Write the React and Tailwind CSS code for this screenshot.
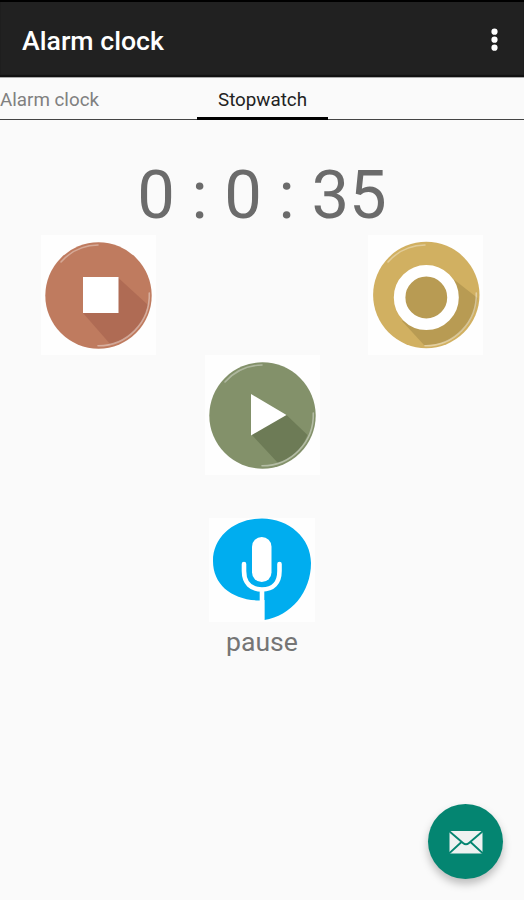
const TABS = [
  { label: "Alarm clock", active: false },
  { label: "Stopwatch", active: true },
];

function Shine() {
  return (
    <g fill="none" stroke="#fff" strokeWidth="1.6" strokeLinecap="round">
      <path d="M20 27A50.500 50.500 0 0 1 57 10" opacity=".35" />
      <path d="M108.300 58A51 51 0 0 1 57 110.800" opacity=".4" />
    </g>
  );
}

function StopIcon() {
  return (
    <svg viewBox="0 0 115 120" className="h-[120px] w-[115px] bg-[#fefefe]" aria-hidden>
      <circle cx="57.5" cy="60.5" r="53.2" fill="#bf7b5f" />
      <path d="M77.5 43L107 70A51 51 0 0 1 70 110L42 78Z" fill="#af6b54" />
      <path d="M42 42H77.500V78H42Z" fill="#fff" />
      <Shine />
    </svg>
  );
}

function LapIcon() {
  return (
    <svg viewBox="0 0 115 120" className="h-[120px] w-[115px] bg-[#fefefe]" aria-hidden>
      <circle cx="58.300" cy="60" r="53.2" fill="#d1b061" />
      <path d="M84 43L109.500 63A51 51 0 0 1 56 110L34 86Z" fill="#b89b53" />
      <circle cx="58.300" cy="62.500" r="26.700" fill="#b89b53" stroke="#fff" strokeWidth="11.600" />
      <Shine />
    </svg>
  );
}

function PlayIcon() {
  return (
    <svg viewBox="0 0 115 120" className="h-[120px] w-[115px] bg-[#fefefe]" aria-hidden>
      <circle cx="57.500" cy="60.500" r="53.2" fill="#83916a" />
      <path d="M81 59.500L102.500 80A49 49 0 0 1 73 108L46 79Z" fill="#6d7b56" />
      <path d="M46 39V80.500L81.500 60Z" fill="#fff" />
      <Shine />
    </svg>
  );
}

function MicIcon() {
  return (
    <svg viewBox="0 0 106 104" className="h-[104px] w-[106px] bg-[#fefefe]" aria-hidden>
      <path
        d="M53 .5C80 .5 102 20 102 45C102 74 82 98 55.500 102V82L50.500 82.500C23 82 4 67 4 43C4 19 25 .5 53 .5Z"
        fill="#00adef"
      />
      <rect x="43" y="19" width="19.500" height="45" rx="9.750" fill="#fff" />
      <g fill="none" stroke="#fff" strokeWidth="4.600" strokeLinecap="round">
        <path d="M35 46V53C35 65 42 71.500 53 71.500S70.500 65 70.500 53V46" />
        <path d="M53 72V103" strokeLinecap="butt" />
      </g>
    </svg>
  );
}

function MailIcon() {
  return (
    <svg viewBox="0 0 34 24" className="h-6 w-[34px]" aria-hidden>
      <path d="M.5 1H33.500V23.500H.5Z" fill="#eef2f1" />
      <path d="M0 1L14 13Q17 15.500 20 13L34 1M0 23.500L12.500 12M34 23.500L21.500 12" fill="none" stroke="#048571" strokeWidth="1.900" />
    </svg>
  );
}

function Header() {
  return (
    <header className="flex h-[77px] items-center justify-between border-t-2 border-black bg-[#212121] pl-[22px] pr-[15px] text-white shadow-[inset_0_-2px_1px_#111]">
      <h1 className="mt-1 text-[26.700px] font-medium">Alarm clock</h1>
      <button aria-label="More options">
        <svg viewBox="0 0 29 30" className="h-[30px] w-[29px]" fill="currentColor" aria-hidden>
          <circle cx="14.500" cy="6.700" r="3.100" />
          <circle cx="14.500" cy="14.700" r="3.100" />
          <circle cx="14.500" cy="22.700" r="3.100" />
        </svg>
      </button>
    </header>
  );
}

function Tabs() {
  return (
    <nav className="flex h-[43px] border-b border-[#444] border-t border-t-[#aaa]">
      {TABS.map(({ label, active }) => (
        <button
          key={label}
          className={
            active
              ? "h-[42px] w-[131px] border-b-[3px] border-black pt-[6px] text-[18.800px] text-[#222]"
              : "h-[42px] w-[197px] pt-[3px] text-left text-[18.800px] text-[#808080]"
          }
        >
          {label}
        </button>
      ))}
    </nav>
  );
}

export default function App() {
  return (
    <div className="flex h-[900px] w-[524px] flex-col overflow-hidden bg-[#fafafa] font-[Roboto,sans-serif]">
      <Header />
      <Tabs />
      <main className="flex flex-1 flex-col items-center">
        <p className="mt-[35px] h-[80px] text-center text-[67px] leading-[80px] text-[#6b6b6b]">0 : 0 : 35</p>
        <div className="flex w-full justify-between px-[41px]">
          <button aria-label="Stop"><StopIcon /></button>
          <button aria-label="Lap"><LapIcon /></button>
        </div>
        <button aria-label="Start"><PlayIcon /></button>
        <button aria-label="Voice command" className="mt-[43px]"><MicIcon /></button>
        <p className="mt-1 text-[26.600px] leading-8 text-[#757575]">pause</p>
        <button
          aria-label="Send mail"
          className="mt-auto mr-[21px] mb-[21px] flex size-[75px] items-center justify-center self-end rounded-full bg-[#048571] shadow-[0_5px_8px_rgba(0,0,0,0.25)]"
        >
          <MailIcon />
        </button>
      </main>
    </div>
  );
}
